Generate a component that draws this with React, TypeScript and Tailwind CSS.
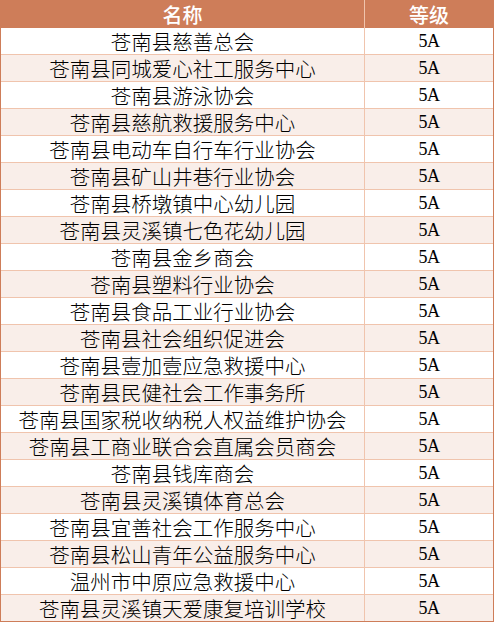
const ROWS: string[] = [
  '苍南县慈善总会',
  '苍南县同城爱心社工服务中心',
  '苍南县游泳协会',
  '苍南县慈航救援服务中心',
  '苍南县电动车自行车行业协会',
  '苍南县矿山井巷行业协会',
  '苍南县桥墩镇中心幼儿园',
  '苍南县灵溪镇七色花幼儿园',
  '苍南县金乡商会',
  '苍南县塑料行业协会',
  '苍南县食品工业行业协会',
  '苍南县社会组织促进会',
  '苍南县壹加壹应急救援中心',
  '苍南县民健社会工作事务所',
  '苍南县国家税收纳税人权益维护协会',
  '苍南县工商业联合会直属会员商会',
  '苍南县钱库商会',
  '苍南县灵溪镇体育总会',
  '苍南县宜善社会工作服务中心',
  '苍南县松山青年公益服务中心',
  '温州市中原应急救援中心',
  '苍南县灵溪镇天爱康复培训学校',
];

export default function App() {
  return (
    <div className="w-[494px] h-[622px] bg-white border-x border-b border-[#ce7d59] font-['Noto_Sans_CJK_SC',sans-serif] text-black">
      {/* Header */}
      <div className="flex h-[28px] bg-[#ce7d59] text-white text-[20px] font-medium">
        <div className="w-[364px] border-r border-[#f0c4ad] flex items-center justify-center leading-[27px]">名称</div>
        <div className="flex-1 flex items-center justify-center leading-[27px]">等级</div>
      </div>

      {/* Rows */}
      {ROWS.map((name, i) => (
        <div
          key={i}
          className={
            'flex ' +
            (i === ROWS.length - 1 ? 'h-[26px] ' : 'h-[27px] border-b border-[#f0c4ad] ') +
            (i % 2 === 1 ? 'bg-[#f9eee9]' : 'bg-white')
          }
        >
          <div className="w-[364px] border-r border-[#f0c4ad] flex items-center justify-center text-[20.5px] font-light leading-[26px] whitespace-nowrap">
            {name}
          </div>
          <div className="flex-1 flex items-center justify-center text-[18px] leading-[26px] font-['Liberation_Serif',serif] tracking-[-0.5px]">
            5A
          </div>
        </div>
      ))}
    </div>
  );
}
